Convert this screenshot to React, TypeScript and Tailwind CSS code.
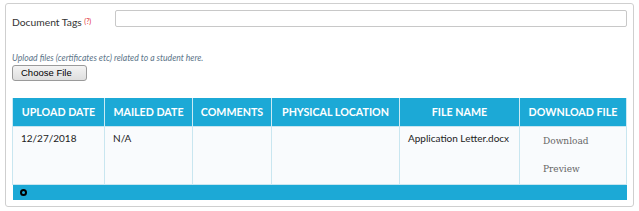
import React from 'react'

const font = { fontFamily: "'Lato', 'Open Sans', sans-serif" }

const headers = [
  { label: 'UPLOAD DATE', w: 'w-[92px]' },
  { label: 'MAILED DATE', w: 'w-[88px]' },
  { label: 'COMMENTS', w: 'w-[79px]' },
  { label: 'PHYSICAL LOCATION', w: 'w-[128px]' },
  { label: 'FILE NAME', w: 'w-[120px]' },
  { label: 'DOWNLOAD FILE', w: 'w-[107px]' },
]

export default function App() {
  return (
    <div className="bg-white w-[639px] h-[211px] pt-[3px] pl-[5px]" style={font}>
      <div className="w-[629px] h-[204px] rounded-[3px] border border-[#cfcfcf] px-[6px] pt-[6px]">
        <div className="flex items-start">
          <div className="w-[103px] pt-[6px] text-[10.3px] leading-[13px] text-[#333]">
            Document Tags{' '}
            <sup className="text-[7px] text-[#e0262e] relative -top-[2px]">(?)</sup>
          </div>
          <input
            type="text"
            className="w-[512px] h-[17px] border border-[#c8c8c8] rounded-[2px] outline-none"
          />
        </div>

        <p className="mt-[24px] text-[8.6px] leading-[10px] italic text-[#5b7488]">
          Upload files (certificates etc) related to a student here.
        </p>
        <button
          className="block mt-[2px] w-[75px] h-[16px] rounded-[3px] border border-[#9a9a9a] bg-gradient-to-b from-[#f4f4f4] to-[#dedede] text-left pl-[8px] text-[9.5px] leading-[12px] text-black"
          style={{ fontFamily: "'Liberation Sans', Arial, sans-serif" }}
        >
          Choose File
        </button>

        <table className="mt-[17px] w-[614px] border-collapse table-fixed">
          <thead>
            <tr className="bg-[#1ca9d6]">
              {headers.map((h) => (
                <th
                  key={h.label}
                  className={`${h.w} h-[28px] p-0 border-x border-[#cbeaf4] text-white text-[10.7px] leading-[13px] font-bold text-center whitespace-nowrap`}
                >
                  {h.label}
                </th>
              ))}
            </tr>
          </thead>
          <tbody>
            <tr className="bg-[#f9fbfd] align-top text-[10px] leading-[12px] text-[#222]">
              <td className="h-[58px] border border-[#c9e6f0] pl-[8px] pt-[5px]">12/27/2018</td>
              <td className="border border-[#c9e6f0] pl-[8px] pt-[5px]">N/A</td>
              <td className="border border-[#c9e6f0]"></td>
              <td className="border border-[#c9e6f0]"></td>
              <td className="border border-[#c9e6f0] pl-[8px] pt-[5px]">Application Letter.docx</td>
              <td
                className="border border-[#c9e6f0] pl-[23px] pt-[8px] text-[9px] text-[#666]"
                style={{ fontFamily: "'DejaVu Serif', 'Liberation Serif', serif" }}
              >
                <div className="leading-[12px]">Download</div>
                <div className="leading-[12px] mt-[16px]">Preview</div>
              </td>
            </tr>
            <tr className="bg-[#1ca9d6]">
              <td colSpan={6} className="h-[16px] p-0 pl-[7px]">
                <span className="block w-[7px] h-[7px] rounded-full border-[2px] border-black" />
              </td>
            </tr>
          </tbody>
        </table>
      </div>
    </div>
  )
}
